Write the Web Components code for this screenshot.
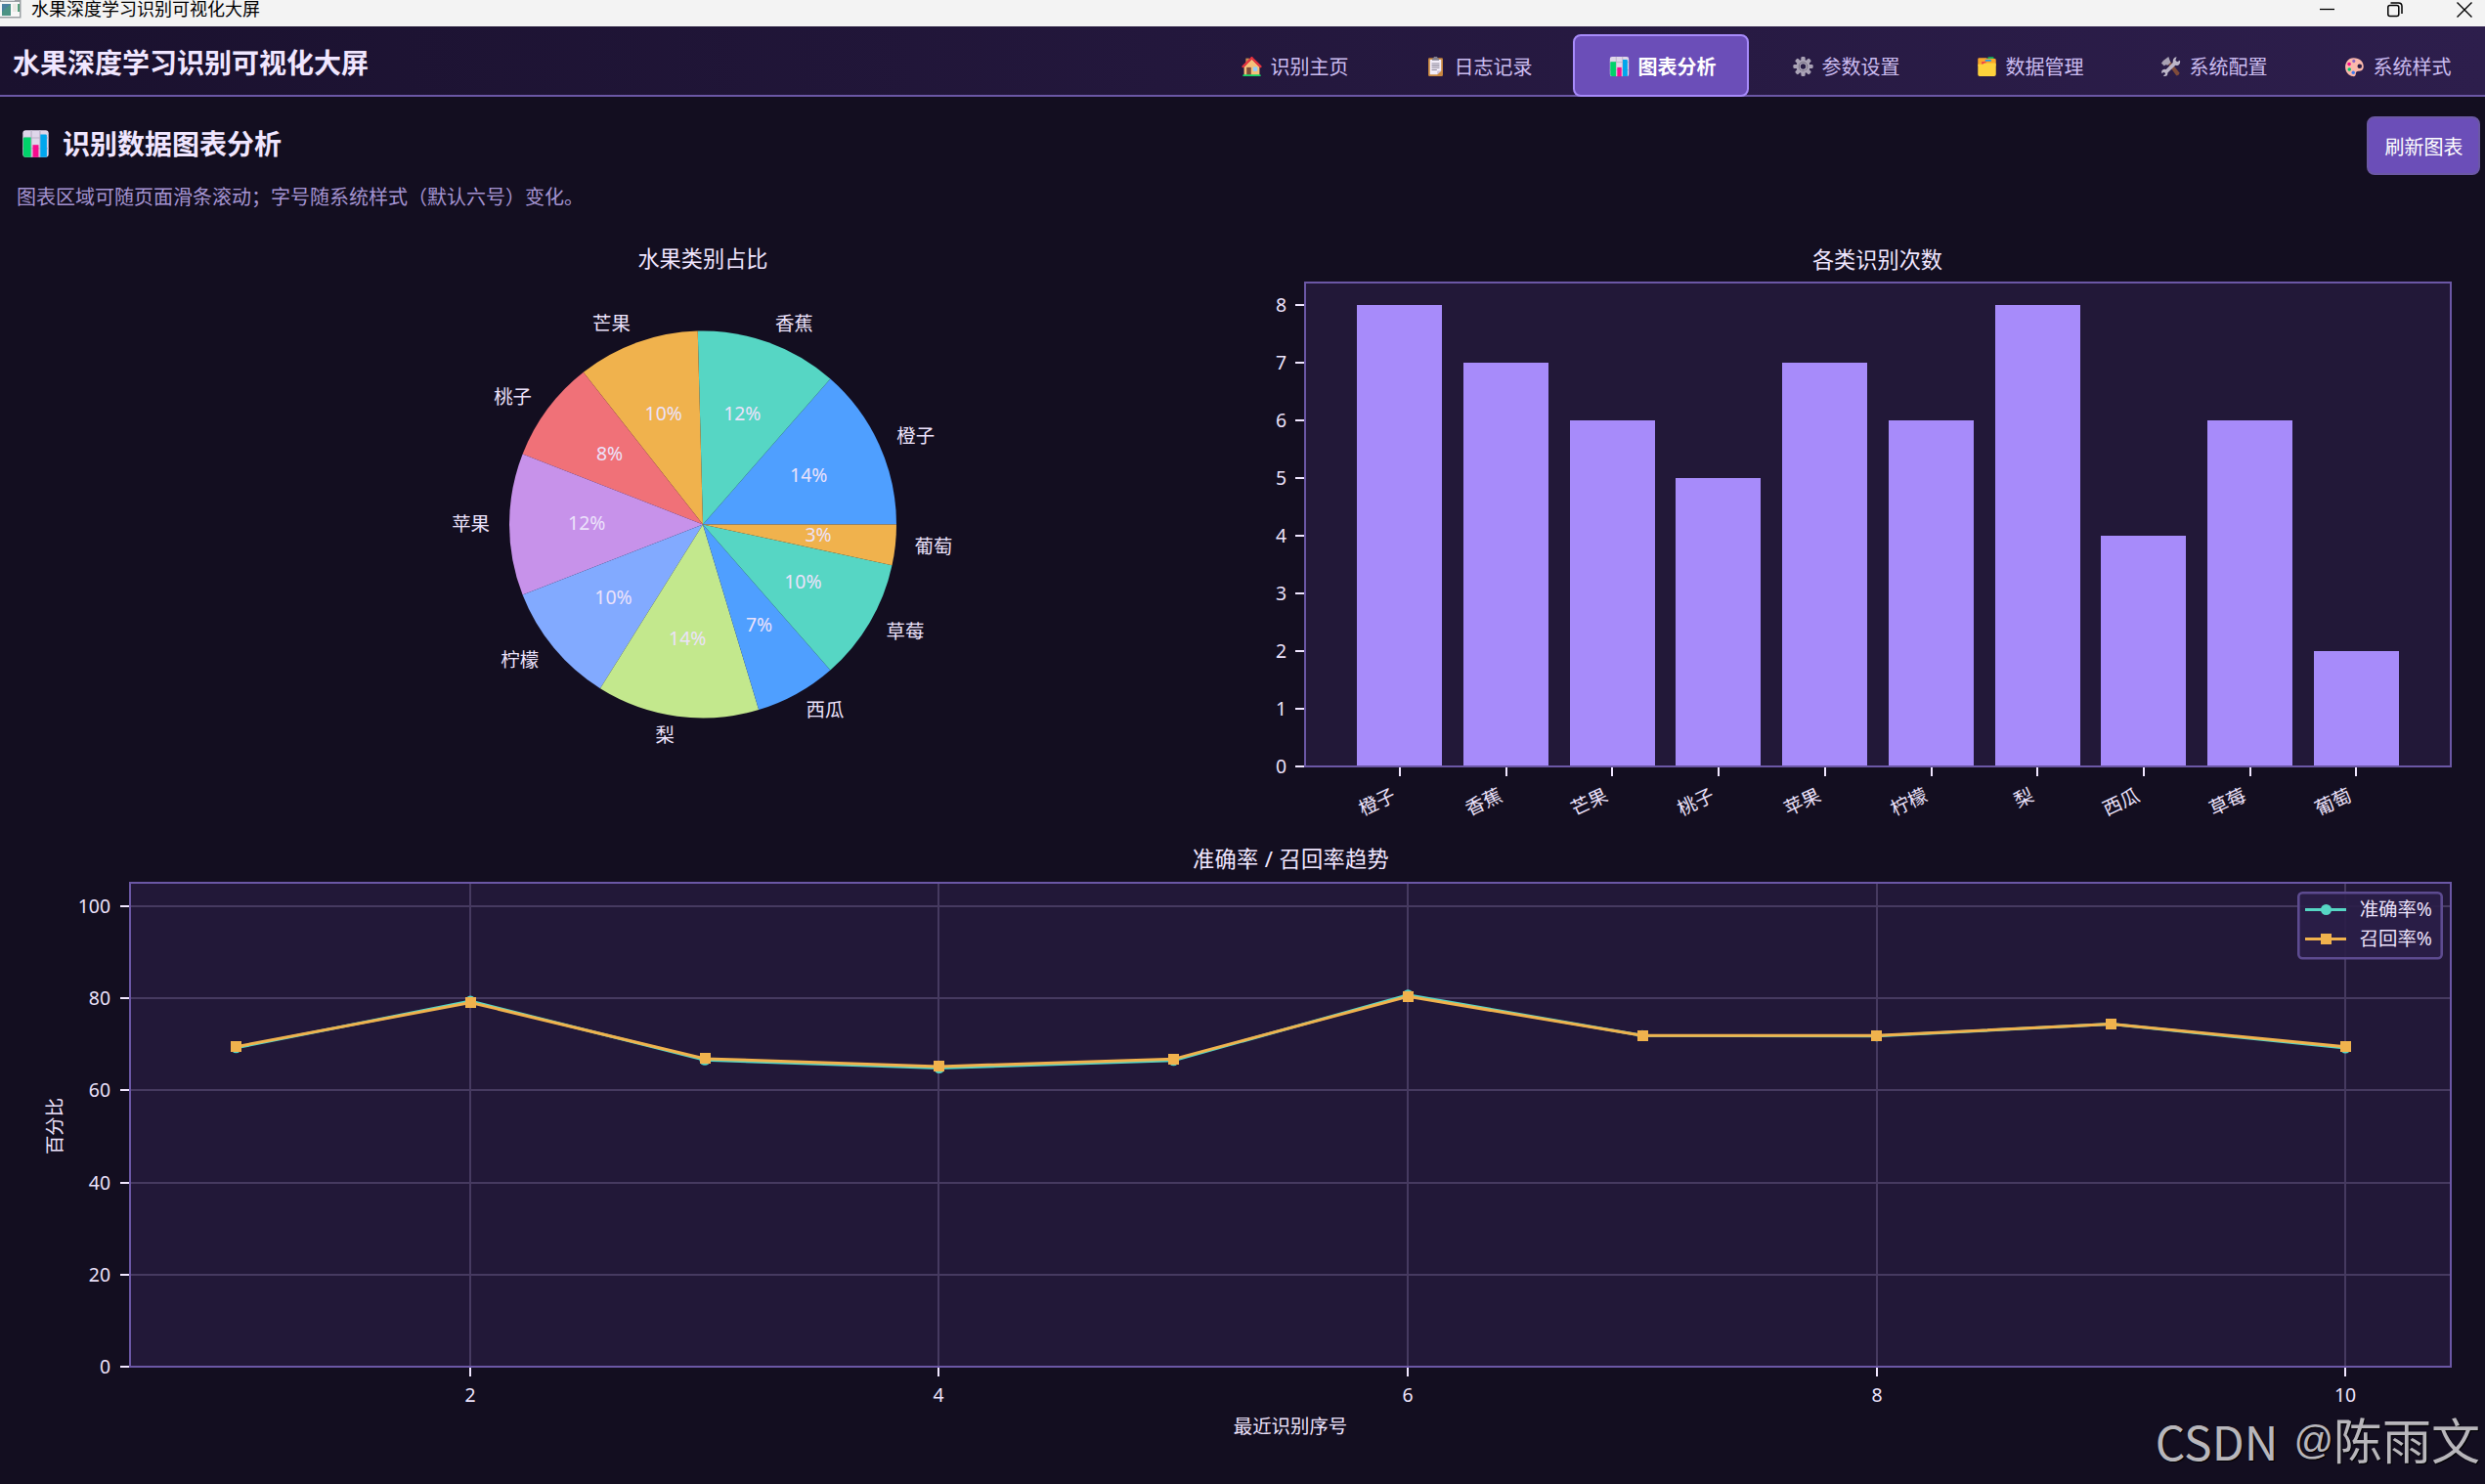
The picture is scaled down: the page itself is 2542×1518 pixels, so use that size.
<!DOCTYPE html>
<html lang="zh-CN">
<head>
<meta charset="utf-8">
<title>水果深度学习识别可视化大屏</title>
<style>
  body {
    margin: 0;
    background: #130e20;
    color: #f0e6ff;
    font-family: "Noto Sans", "Noto Sans CJK SC", sans-serif;
    font-size: 20px;
    overflow: hidden;
  }
</style>
</head>
<body>
<app-window>
  <title-bar>水果深度学习识别可视化大屏</title-bar>
  <nav-bar heading="水果深度学习识别可视化大屏">
    <nav-item icon="home">识别主页</nav-item>
    <nav-item icon="log">日志记录</nav-item>
    <nav-item icon="chart" active>图表分析</nav-item>
    <nav-item icon="gear">参数设置</nav-item>
    <nav-item icon="folder">数据管理</nav-item>
    <nav-item icon="tools">系统配置</nav-item>
    <nav-item icon="palette">系统样式</nav-item>
  </nav-bar>
  <page-header heading="识别数据图表分析">
    图表区域可随页面滑条滚动；字号随系统样式（默认六号）变化。
    <span slot="action">刷新图表</span>
  </page-header>
  <chart-grid>
    <pie-chart></pie-chart>
    <bar-chart></bar-chart>
    <line-chart></line-chart>
  </chart-grid>
  <water-mark site="CSDN">陈雨文</water-mark>
</app-window>

<script>
const fruits = [
  ["橙子", 8], ["香蕉", 7], ["芒果", 6], ["桃子", 5], ["苹果", 7],
  ["柠檬", 6], ["梨", 8], ["西瓜", 4], ["草莓", 6], ["葡萄", 2],
];
const precision = [69.25, 79.4, 66.6, 64.85, 66.5, 80.75, 71.9, 71.8, 74.4, 69.2];
const recall = [69.5, 79.1, 66.9, 65.2, 66.8, 80.4, 71.9, 71.9, 74.4, 69.5];

const icons = {
  home: `
    <rect x="5" y="3" width="4" height="7" fill="#c98d52"/>
    <path d="M3 13L12 4l9 9v10H3z" fill="#f5c07a"/>
    <path d="M12 2.5L1.8 12.6" stroke="#e8343f" stroke-width="2.6" stroke-linecap="round"/>
    <path d="M12 2.5l10.2 10.1" stroke="#e8343f" stroke-width="2.6" stroke-linecap="round"/>
    <rect x="6" y="13.5" width="5.2" height="9" fill="#7d4a38"/>
    <rect x="13.5" y="13" width="5" height="5" fill="#8fd0ff"/>
    <rect x="1.5" y="21.8" width="21" height="2.2" rx="1" fill="#12d667"/>`,
  log: `
    <rect x="3.5" y="2.5" width="17" height="21.5" rx="1.5" fill="#c9883f"/>
    <path d="M5.5 4.5h13v13l-4.5 4.5h-8.5z" fill="#f3edf9"/>
    <path d="M14 22v-4.5h4.5z" fill="#cdbfd8"/>
    <path d="M10.3 1h3.4l1.3 2.5h1v2H8v-2h1z" fill="#83808f"/>
    <path d="M7.5 9h9M7.5 11.5h9M7.5 14h9M7.5 16.5h6" stroke="#8d8799" stroke-width="1.2"/>`,
  chart: `
    <rect x="1" y="1" width="22" height="23" rx="2.5" fill="#dfd6ea"/>
    <path d="M8.3 1v23M15.7 1v23M1 7.5h22M1 16.5h22" stroke="#b9b0c6" stroke-width="1"/>
    <path d="M2.5 7H8v17H3.5q-2 0-2-2V8q0-1 1-1z" fill="#00d26a"/>
    <rect x="9.5" y="13.5" width="5" height="10.5" fill="#f70a8d"/>
    <path d="M16 4.5h4.5q1 0 1 1V24H16z" fill="#00a6ed"/>`,
  gear: `
    <g fill="#aaa3b6">
      <rect x="9.6" y="1" width="4.8" height="23" rx="1.5"/>
      <rect x="9.6" y="1" width="4.8" height="23" rx="1.5" transform="rotate(45 12 12.5)"/>
      <rect x="9.6" y="1" width="4.8" height="23" rx="1.5" transform="rotate(90 12 12.5)"/>
      <rect x="9.6" y="1" width="4.8" height="23" rx="1.5" transform="rotate(135 12 12.5)"/>
      <circle cx="12" cy="12.5" r="8"/>
    </g>
    <circle cx="12" cy="12.5" r="5.4" fill="#6c6578"/>
    <circle cx="12" cy="12.5" r="4.4" fill="#b9b2c4"/>
    <circle cx="12" cy="12.5" r="3.1" fill="#271c44"/>`,
  folder: `
    <rect x="13" y="1.5" width="7" height="4" rx="1" fill="#13b85b"/>
    <path d="M3 2.5h8l2 1h8q1.5 0 1.5 1.5v7h-21V4q0-1.5 1.5-1.5z" fill="#f9a72b"/>
    <rect x="10" y="4.5" width="7" height="2" fill="#1e9cf0"/>
    <path d="M6 7h5v3H6z" fill="#f0384e"/>
    <path d="M1.5 10h5.5l2-1.5h12q1.5 0 1.5 1.5v12q0 2-2 2h-17q-2 0-2-2z" fill="#fdd23c"/>`,
  tools: `
    <path d="M8 8.5L11 6l11 13.5q.5 1.5-.8 2.8-1.2 1.2-2.7.7z" fill="#7f4b3a"/>
    <path d="M9.5 1L11 5.5 12 8 8.5 11 6 10.5 4.5 12 1 8.5 2.5 7l.5-1z" fill="#a8a1b3"/>
    <path d="M19 1.5l-1.5 3.5 2 2 3.3-1.5q.8 4-2 5.5-1.5.8-3.3.2L8.5 20q.3 4-3.5 4-1 0-1.6-.3L6 21l-1.5-2-3 1.5q-.8-4.5 3.3-5 1 0 1.7.3L14.5 8Q14 2 19 1.5z" fill="#bdb6c8"/>`,
  palette: `
    <path d="M11 2.5C4.5 2.5 1.3 8 1.3 13c0 6 4 10.2 8.7 11 2.8.4 3.6-1.8 3.5-3.3-.1-1.7 1.2-2.8 3-2.8 3.5 0 6-1.7 6-5.5C22.5 7 18 2.5 11 2.5z" fill="#fbb8ab"/>
    <circle cx="18" cy="12.2" r="2.6" fill="#271c44"/>
    <ellipse cx="11.2" cy="6.3" rx="1.8" ry="2" fill="#8d65c5"/>
    <circle cx="5.8" cy="9.8" r="2" fill="#f70a8d"/>
    <circle cx="6" cy="15.8" r="2" fill="#00c968"/>
    <circle cx="10.6" cy="19.6" r="1.9" fill="#3f7cf0"/>`,
};

function icon(name) {
  return `<svg class="icon" viewBox="0 0 24 25" fill="none">${icons[name] || ""}</svg>`;
}

class BaseElement extends HTMLElement {
  constructor() {
    super();
    this.attachShadow({ mode: "open" });
  }

  connectedCallback() {
    this.shadowRoot.innerHTML = this.render();
  }
}

class AppWindow extends BaseElement {
  render() {
    return `
      <style>
        :host {
          position: relative;
          display: flex;
          flex-direction: column;
          height: 1518px;
          overflow: hidden;
        }
      </style>
      <slot></slot>`;
  }
}

class TitleBar extends BaseElement {
  render() {
    return `
      <style>
        :host {
          display: flex;
          align-items: flex-start;
          justify-content: space-between;
          flex: none;
          height: 27px;
          background: #f3f3f3;
          color: #000;
          font-family: "Liberation Sans", "Noto Sans CJK SC", sans-serif;
          font-size: 18px;
          line-height: 20px;
        }
        .name { display: flex; gap: 10px; height: 20px; }
        .buttons { display: flex; gap: 54px; padding: 2px 13px 0 0; }
        svg { display: block; }
      </style>
      <div class="name">
        <svg width="22" height="19" viewBox="0 0 22 19">
          <rect x="-1" y="0" width="22.5" height="18.5" fill="#9a9fa3"/>
          <rect x="0" y="2" width="20" height="15" fill="#f7f7f7"/>
          <rect x="1" y="0" width="14" height="1" fill="#d8dcdf"/>
          <rect x="2" y="4" width="9" height="12" fill="#4c9384"/>
          <path d="M2 4h9L2 12z" fill="#4b81a0"/>
          <rect x="13" y="4" width="4" height="8" fill="#e9e9e4"/>
          <rect x="18" y="4" width="2" height="8" fill="#56a07c"/>
        </svg>
        <slot></slot>
      </div>
      <div class="buttons">
        <svg width="16" height="16"><path d="M0 7.5h15" stroke="#000" stroke-width="1.3"/></svg>
        <svg width="16" height="16" viewBox="1 0 16 16" fill="none" stroke="#000" stroke-width="1.5" overflow="visible">
          <rect x="0.8" y="3.5" width="11" height="11" rx="2"/>
          <path d="M3.5 1h8q3.5 0 3.5 3.5v7.5"/>
        </svg>
        <svg width="16" height="16"><path d="M.5.5l15 15M15.5.5l-15 15" stroke="#000" stroke-width="1.4"/></svg>
      </div>`;
  }
}

class NavBar extends BaseElement {
  render() {
    return `
      <style>
        :host {
          display: flex;
          flex: none;
          box-sizing: border-box;
          height: 72px;
          padding: 0 1px 0 13px;
          align-items: center;
          justify-content: space-between;
          background: linear-gradient(90deg, #1a112e, #2d1e4c);
          border-bottom: 2px solid #6b57a5;
        }
        h1 { margin: 4px 0 0; font-size: 28px; line-height: 40px; font-weight: 700; }
        nav { display: flex; gap: 8px; align-self: flex-end; margin-bottom: -2px; }
      </style>
      <h1>${this.getAttribute("heading")}</h1>
      <nav><slot></slot></nav>`;
  }
}

class NavItem extends BaseElement {
  render() {
    return `
      <style>
        :host {
          display: flex;
          box-sizing: border-box;
          width: 180px;
          height: 64px;
          padding: 0 0 0 2px;
          align-items: center;
          justify-content: center;
          gap: 8px;
          border: 2px solid transparent;
          border-radius: 8px;
          color: #cbbcf0;
        }
        :host([active]) {
          background: #6b4eb8;
          border-color: #a78bfa;
          color: #fff;
          font-weight: 700;
        }
        .icon { width: 23px; height: 22px; flex: none; margin-top: 1px; }
      </style>
      ${icon(this.getAttribute("icon"))}<slot></slot>`;
  }
}

class PageHeader extends BaseElement {
  render() {
    return `
      <style>
        :host {
          display: flex;
          flex: none;
          box-sizing: border-box;
          height: 131px;
          padding: 20px 5px 0 17px;
          justify-content: space-between;
          align-items: flex-start;
        }
        h2 {
          display: flex;
          align-items: center;
          gap: 12px;
          margin: 0 0 0 4px;
          padding-top: 8px;
          font-size: 28px;
          line-height: 40px;
          font-weight: 700;
        }
        .icon { width: 31px; height: 30px; }
        p { margin: 21px 0 0; line-height: 28px; color: #a594d2; }
        button {
          width: 116px;
          height: 60px;
          padding: 0 0 0 1px;
          border: 2px solid #6b57a5;
          border-radius: 8px;
          background: #6b4eb8;
          color: #fff;
          font: inherit;
        }
      </style>
      <div>
        <h2>${icon("chart")}${this.getAttribute("heading")}</h2>
        <p><slot></slot></p>
      </div>
      <button><slot name="action"></slot></button>`;
  }
}

class ChartGrid extends BaseElement {
  render() {
    return `
      <style>
        :host {
          display: grid;
          flex: none;
          grid-template-columns: 1271px 1271px;
          grid-template-rows: 620px 668px;
        }
        ::slotted(line-chart) { grid-column: 1 / 3; }
      </style>
      <slot></slot>`;
  }
}

const chartStyle = `
  <style>
    :host { display: block; }
    svg { display: block; width: 100%; height: 100%; }
    text { fill: #ece2fb; font-size: 19.4px; }
    .title { font-size: 22.2px; text-anchor: middle; fill: #f0e6ff; }
    .mid { text-anchor: middle; }
    .end { text-anchor: end; }
    .tick { stroke: #f0e6ff; stroke-width: 2; }
    .plot { fill: #221838; }
    .spine { fill: none; stroke: #6b57a5; stroke-width: 2; }
    .grid { stroke: #463a60; stroke-width: 2; }
  </style>`;

// y is the vertical centre of the glyphs
function label(x, y, text, cls = "", extra = "") {
  return `<text x="${x.toFixed(1)}" y="${y.toFixed(1)}" dy=".37em" class="${cls}" ${extra}>${text}</text>`;
}

class PieChart extends BaseElement {
  render() {
    const colors = ["#4f9fff", "#56d6c4", "#f0b24d", "#f07178", "#c792ea", "#82aaff", "#c3e88d"];
    const cx = 719, cy = 306.5, r = 198;
    const total = fruits.reduce((sum, f) => sum + f[1], 0);
    const at = (angle, k) => [cx + r * k * Math.cos(angle), cy - r * k * Math.sin(angle)];
    let angle = 0;
    let wedges = "";
    let labels = "";
    fruits.forEach(([name, count], i) => {
      const end = angle + (count / total) * Math.PI * 2;
      const mid = (angle + end) / 2;
      const [x1, y1] = at(angle, 1);
      const [x2, y2] = at(end, 1);
      wedges += `<path d="M${cx} ${cy}L${x1} ${y1}A${r} ${r} 0 0 0 ${x2} ${y2}z" fill="${colors[i % 7]}"/>`;
      const [lx, ly] = at(mid, 1.1);
      labels += label(lx < cx ? lx - 0.2 : lx, ly - 1, name, lx < cx ? "end" : "");
      const [px, py] = at(mid, 0.6);
      labels += label(px, py - 1.8, Math.round((count / total) * 100) + "%", "mid");
      angle = end;
    });
    return `${chartStyle}
      <svg viewBox="0 0 1271 620">
        ${label(719, 34.5, "水果类别占比", "title")}
        ${wedges}${labels}
      </svg>`;
  }
}

class BarChart extends BaseElement {
  render() {
    const left = 64, right = 1236, top = 59, bottom = 554, unit = 59;
    let out = "";
    fruits.forEach(([name, count], i) => {
      const x = Math.round(117.1 + i * 108.74);
      const tick = Math.round(161 + i * 108.7);
      out += `<rect x="${x}" y="${bottom - count * unit}" width="87" height="${count * unit}" fill="#a78bfa"/>`;
      out += `<path class="tick" d="M${tick} ${bottom + 1}v9"/>`;
      const lx = tick - (name.length === 1 ? 14 : 23.5);
      const ly = name.length === 1 ? 586 : 590;
      out += label(lx, ly, name, "mid", `transform="rotate(-25 ${lx} ${ly})"`);
    });
    for (let v = 0; v <= 8; v++) {
      const y = bottom - v * unit;
      out += `<path class="tick" d="M${left - 10} ${y}h9"/>` + label(45, y, v, "end");
    }
    return `${chartStyle}
      <svg viewBox="0 0 1271 620">
        <rect class="plot" x="${left}" y="${top}" width="${right - left}" height="${bottom - top}"/>
        ${label(649.5, 35.5, "各类识别次数", "title")}
        ${out}
        <rect class="spine" x="${left}" y="${top}" width="${right - left}" height="${bottom - top}"/>
      </svg>`;
  }
}

class LineChart extends BaseElement {
  series(values, color, marker) {
    const pts = values.map((v, i) => [241.5 + i * 239.75, 548 - v * 4.71]);
    return `
      <polyline points="${pts.join(" ")}" fill="none" stroke="${color}" stroke-width="3"/>
      ${pts.map(([x, y]) => this[marker](x, y, color)).join("")}`;
  }

  circle(x, y, color) {
    return `<circle cx="${x}" cy="${y}" r="5.5" fill="${color}"/>`;
  }

  square(x, y, color) {
    return `<rect x="${Math.round(x - 5.5)}" y="${Math.round(y - 5.5)}" width="11" height="11" fill="${color}"/>`;
  }

  render() {
    const left = 133, right = 2507, top = 53, bottom = 548;
    let axes = "";
    for (let v = 0; v <= 100; v += 20) {
      const y = Math.round(bottom - v * 4.71);
      axes += `<path class="grid" d="M${left} ${y}H${right}"/>`;
      axes += `<path class="tick" d="M${left - 10} ${y}h9"/>` + label(113, y, v, "end");
    }
    for (let v = 2; v <= 10; v += 2) {
      const x = Math.round(0.9 + v * 239.83);
      axes += `<path class="grid" d="M${x} ${top}V${bottom}"/>`;
      axes += `<path class="tick" d="M${x} ${bottom + 1}v9"/>` + label(x, 576.5, v, "mid");
    }
    return `${chartStyle}
      <svg viewBox="0 0 2542 668">
        <rect class="plot" x="${left}" y="${top}" width="${right - left}" height="${bottom - top}"/>
        <g letter-spacing=".35">${label(1320.5, 28.5, "准确率 / 召回率趋势", "title")}</g>
        ${axes}
        ${this.series(precision, "#56d6c4", "circle")}
        ${this.series(recall, "#f0b24d", "square")}
        <rect class="spine" x="${left}" y="${top}" width="${right - left}" height="${bottom - top}"/>
        ${label(55.5, 302, "百分比", "mid", 'transform="rotate(-90 55.5 302)"')}
        ${label(1320, 609, "最近识别序号", "mid")}
        <rect x="2351.3" y="63.3" width="146.4" height="67" rx="4" fill="#2a1e48" fill-opacity=".9" stroke="#5d4b90" stroke-width="2.6"/>
        <path d="M2358 80.5h42" stroke="#56d6c4" stroke-width="3"/>
        ${this.circle(2379.5, 80.5, "#56d6c4")}
        <path d="M2358 110.5h42" stroke="#f0b24d" stroke-width="3"/>
        ${this.square(2379.5, 110.5, "#f0b24d")}
        ${label(2413.7, 80, "准确率%")}
        ${label(2413.7, 110, "召回率%")}
      </svg>`;
  }
}

class WaterMark extends BaseElement {
  render() {
    return `
      <style>
        :host {
          position: absolute;
          right: 5px;
          bottom: 7px;
          display: flex;
          align-items: flex-end;
          color: #b8b6bb;
          font-family: "Liberation Sans", "Noto Sans CJK SC", sans-serif;
          font-size: 50px;
          line-height: 70px;
          white-space: nowrap;
          text-shadow: 1px 1px 1px #000;
        }
        .site {
          margin: 0 16px 3px 0;
          font-family: "Noto Sans CJK SC", sans-serif;
          font-size: 48px;
        }
        .at { font-size: 40px; margin-bottom: 3px; }
      </style>
      <span class="site">${this.getAttribute("site")}</span>
      <span class="at">@</span>
      <slot></slot>`;
  }
}

customElements.define("app-window", AppWindow);
customElements.define("title-bar", TitleBar);
customElements.define("nav-bar", NavBar);
customElements.define("nav-item", NavItem);
customElements.define("page-header", PageHeader);
customElements.define("chart-grid", ChartGrid);
customElements.define("pie-chart", PieChart);
customElements.define("bar-chart", BarChart);
customElements.define("line-chart", LineChart);
customElements.define("water-mark", WaterMark);
</script>
</body>
</html>
